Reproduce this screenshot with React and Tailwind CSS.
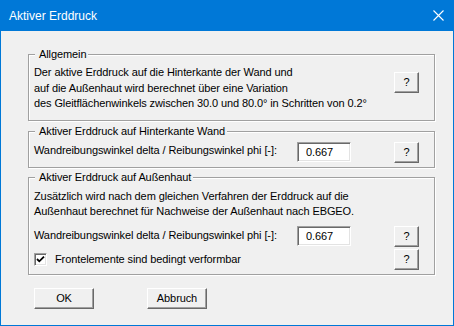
import React from 'react';

// Classic raised push button
const PushButton = ({ children, className = '' }) => (
  <button
    type="button"
    className={`flex items-center justify-center bg-[#f0f0f0] border border-t-white border-l-white border-r-[#696969] border-b-[#696969] shadow-[inset_-1px_-1px_0_#a0a0a0] text-[11px] leading-none text-black ${className}`}
  >
    {children}
  </button>
);

// Sunken edit field
const Field = ({ value }) => (
  <input
    readOnly
    value={value}
    className="w-[54px] h-[20px] bg-white border border-t-[#a0a0a0] border-l-[#a0a0a0] border-r-white border-b-white shadow-[inset_1px_1px_0_#696969,inset_-1px_-1px_0_#e3e3e3] pl-[8px] text-[11px] text-black outline-none font-['Liberation_Sans',Arial,sans-serif]"
  />
);

// Etched group box with its caption over the top line
const Group = ({ title, className = '', children }) => (
  <div
    className={`relative w-[407px] border border-[#a0a0a0] shadow-[inset_1px_1px_0_#fff,1px_1px_0_#fff] pl-[5px] pr-[15px] ${className}`}
  >
    <span className="absolute -top-[7px] left-[6px] bg-[#f0f0f0] pl-[4px] pr-[2px] leading-[13px]">
      {title}
    </span>
    {children}
  </div>
);

const App = () => {
  return (
    <div className="w-[454px] h-[326px] flex flex-col bg-[#0078d7] px-[1px] pb-[1px] font-['Liberation_Sans',Arial,sans-serif] text-[11px] text-black tracking-[-0.1px]">
      {/* title bar */}
      <div className="h-[31px] shrink-0 flex items-center justify-between pl-[8px] pr-[9px] text-white">
        <span className="text-[12px] leading-[16px] tracking-normal">Aktiver Erddruck</span>
        <svg width="11" height="11" viewBox="0 0 11 11" className="shrink-0">
          <path d="M0.5 0.5 L10.5 10.5 M10.5 0.5 L0.5 10.5" stroke="#fff" strokeWidth="1.1" fill="none" />
        </svg>
      </div>

      {/* dialog body */}
      <div className="flex-1 bg-[#f0f0f0] pl-[27px] pt-[23px] flex flex-col">
        <Group title="Allgemein" className="h-[67px] pt-[10px] flex justify-between items-start">
          <div className="leading-[15.5px]">
            <div>Der aktive Erddruck auf die Hinterkante der Wand und</div>
            <div>auf die Außenhaut wird berechnet über eine Variation</div>
            <div>des Gleitflächenwinkels zwischen 30.0 und 80.0° in Schritten von 0.2°</div>
          </div>
          <PushButton className="w-[25px] h-[21px] mt-[7px] shrink-0">?</PushButton>
        </Group>

        <Group title="Aktiver Erddruck auf Hinterkante Wand" className="h-[37px] mt-[10px] pt-[10px]">
          <div className="flex items-start">
            <span className="w-[263px] leading-[17px]">Wandreibungswinkel delta / Reibungswinkel phi [-]:</span>
            <Field value="0.667" />
            <PushButton className="w-[25px] h-[21px] ml-auto">?</PushButton>
          </div>
        </Group>

        <Group title="Aktiver Erddruck auf Außenhaut" className="h-[98px] mt-[9px] pt-[11px]">
          <div className="leading-[15px]">
            <div>Zusätzlich wird nach dem gleichen Verfahren der Erddruck auf die</div>
            <div>Außenhaut berechnet für Nachweise der Außenhaut nach EBGEO.</div>
          </div>
          <div className="flex items-start mt-[7px]">
            <span className="w-[263px] leading-[18px]">Wandreibungswinkel delta / Reibungswinkel phi [-]:</span>
            <Field value="0.667" />
            <PushButton className="w-[25px] h-[21px] ml-auto">?</PushButton>
          </div>
          <div className="flex items-center mt-[2px] h-[21px]">
            <span className="w-[13px] h-[13px] bg-white border border-t-[#a0a0a0] border-l-[#a0a0a0] border-r-white border-b-white shadow-[inset_1px_1px_0_#696969,inset_-1px_-1px_0_#e3e3e3] flex items-center justify-center">
              <svg width="9" height="9" viewBox="0 0 9 9">
                <path d="M1 4 L3.3 6.3 L8 1.6" stroke="#000" strokeWidth="1.8" fill="none" />
              </svg>
            </span>
            <span className="ml-[8px] leading-[15px]">Frontelemente sind bedingt verformbar</span>
            <PushButton className="w-[25px] h-[21px] ml-auto">?</PushButton>
          </div>
        </Group>

        <div className="flex gap-[53px] mt-[13px] pl-[6px]">
          <PushButton className="w-[60px] h-[21px]">OK</PushButton>
          <PushButton className="w-[60px] h-[21px]">Abbruch</PushButton>
        </div>
      </div>
    </div>
  );
};

export default App;
